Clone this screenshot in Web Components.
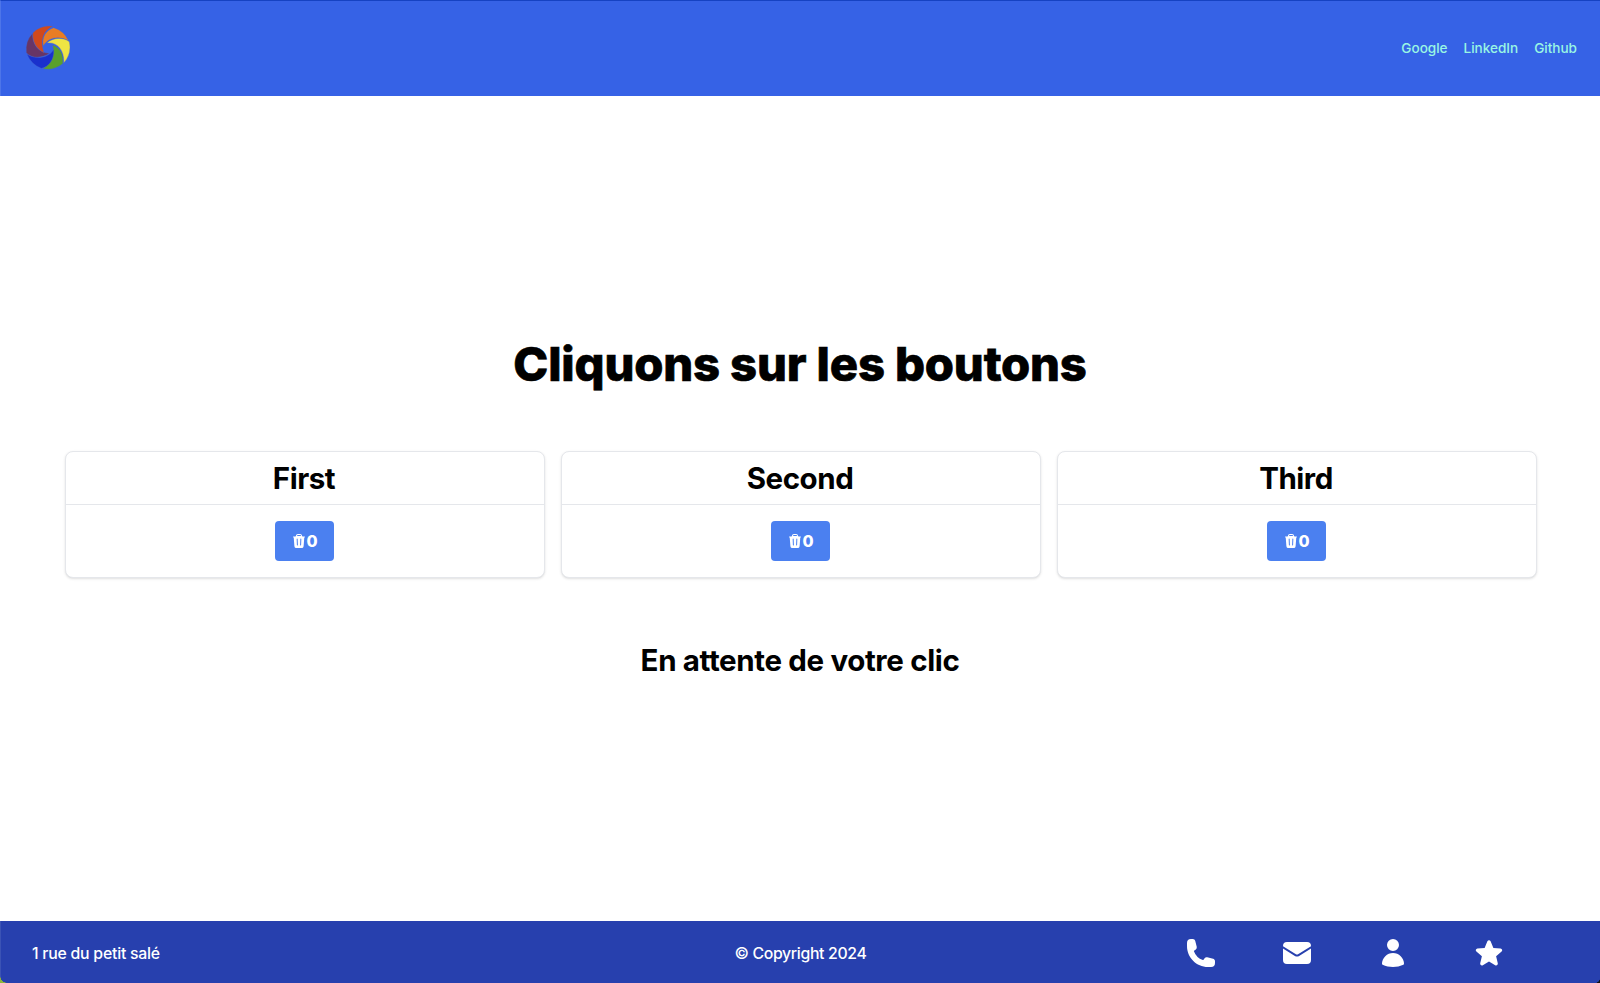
<!DOCTYPE html>
<html lang="fr">
<head>
<meta charset="utf-8">
<title>Cliquons sur les boutons</title>
<style>
html,body{margin:0;height:100%}
body{font-family:Inter,"Liberation Sans",sans-serif;font-size:16px;color:#000;background:#fff;overflow:hidden}
</style>
</head>
<body>
<click-app></click-app>
<script>
function define(name, html, setup) {
  const t = document.createElement('template');
  t.innerHTML = html;
  customElements.define(name, class extends HTMLElement {
    constructor() {
      super();
      this.attachShadow({mode: 'open'}).append(t.content.cloneNode(true));
    }
    connectedCallback() { if (setup) setup(this, this.shadowRoot); }
  });
}

const ICONS = {
  phone: '<path fill-rule="evenodd" clip-rule="evenodd" d="M1.5 4.5a3 3 0 0 1 3-3h1.372c.86 0 1.61.586 1.819 1.42l1.105 4.423a1.875 1.875 0 0 1-.694 1.955l-1.293.97c-.135.101-.164.249-.126.352a11.285 11.285 0 0 0 6.697 6.697c.103.038.25.009.352-.126l.97-1.293a1.875 1.875 0 0 1 1.955-.694l4.423 1.105c.834.209 1.42.959 1.42 1.82V19.5a3 3 0 0 1-3 3h-2.25C8.552 22.5 1.5 15.448 1.5 6.75V4.5Z"/>',
  envelope: '<path d="M1.5 8.67v8.58a3 3 0 0 0 3 3h15a3 3 0 0 0 3-3V8.67l-8.928 5.493a3 3 0 0 1-3.144 0L1.5 8.67Z"/><path d="M22.5 6.908V6.75a3 3 0 0 0-3-3h-15a3 3 0 0 0-3 3v.158l9.714 5.978a1.5 1.5 0 0 0 1.572 0L22.5 6.908Z"/>',
  user: '<path fill-rule="evenodd" clip-rule="evenodd" d="M7.5 6a4.5 4.5 0 1 1 9 0 4.5 4.5 0 0 1-9 0ZM3.751 20.105a8.25 8.25 0 0 1 16.498 0 .75.75 0 0 1-.437.695A18.683 18.683 0 0 1 12 22.5c-2.786 0-5.433-.608-7.812-1.7a.75.75 0 0 1-.437-.695Z"/>',
  star: '<path fill-rule="evenodd" clip-rule="evenodd" d="M10.788 3.21c.448-1.077 1.976-1.077 2.424 0l2.082 5.006 5.404.434c1.164.093 1.636 1.545.749 2.305l-4.117 3.527 1.257 5.273c.271 1.136-.964 2.033-1.96 1.425L12 18.354 7.373 21.18c-.996.608-2.231-.29-1.96-1.425l1.257-5.273-4.117-3.527c-.887-.76-.415-2.212.749-2.305l5.404-.434 2.082-5.005Z"/>',
  trash: '<path fill-rule="evenodd" clip-rule="evenodd" d="M16.5 4.478v.227a48.816 48.816 0 0 1 3.878.512.75.75 0 1 1-.256 1.478l-.209-.035-1.005 13.07a3 3 0 0 1-2.991 2.77H8.084a3 3 0 0 1-2.991-2.77L4.087 6.66l-.209.035a.75.75 0 0 1-.256-1.478A48.567 48.567 0 0 1 7.5 4.705v-.227c0-1.564 1.213-2.9 2.816-2.951a52.662 52.662 0 0 1 3.369 0c1.603.051 2.815 1.387 2.815 2.951Zm-6.136-1.452a51.196 51.196 0 0 1 3.273 0C14.39 3.05 15 3.684 15 4.478v.113a49.488 49.488 0 0 0-6 0v-.113c0-.794.609-1.428 1.364-1.452Zm-.355 5.945a.75.75 0 1 0-1.5.058l.347 9a.75.75 0 1 0 1.499-.058l-.346-9Zm5.48.058a.75.75 0 1 0-1.498-.058l-.347 9a.75.75 0 0 0 1.5.058l.345-9Z"/>'
};

define('solid-icon', `
<style>:host{display:block;width:32px;height:32px}svg{display:block;width:100%;height:100%}</style>
<svg viewBox="0 0 24 24" fill="currentColor"></svg>`,
(el, root) => { root.querySelector('svg').innerHTML = ICONS[el.getAttribute('name')]; });

define('swirl-logo', `
<style>:host{display:block;width:48px;height:48px}svg{display:block}</style>
<svg width="48" height="48" viewBox="72 72 144 144" stroke="#4a64c4" stroke-width="1">
<path fill="#e87d25" d="M130 138C125 110 137 92 161 83A72 72 0 0 1 206 123C178 106 144 112 130 138Z"/>
<path fill="#efe443" d="M141 129C157 113 188 110 208 125A72 72 0 0 1 191 189C194 155 175 125 141 129Z"/>
<path fill="#5aa02c" d="M158 135C181 143 192 165 188 191A72 72 0 0 1 129 206C152 192 166 164 158 135Z"/>
<path fill="#1a30cd" d="M161 149C163 180 146 200 124 205A76 76 0 0 1 81 163C111 180 145 174 161 149Z"/>
<path fill="#673567" d="M148 160C127 175 94 176 79 158A72 72 0 0 1 98 100C96 132 114 158 148 160Z"/>
<path fill="#d1491c" d="M132 158C107 146 96 122 99 98A70 70 0 0 1 159 79C130 91 119 121 132 158Z"/>
</svg>`);

define('nav-link', `
<style>:host{display:block}a{color:#99f6e4;text-decoration:none;font-size:13.6px;line-height:20px;letter-spacing:-.03px;font-weight:500;display:block}</style>
<a href="#"><slot></slot></a>`);

define('app-header', `
<style>
:host{display:flex;align-items:center;justify-content:space-between;box-sizing:border-box;height:96px;padding:0 23px 1px 24px;background:#3662e6;border-top:1px solid #1642c2;border-left:1px solid #4d75e9}
swirl-logo{margin-left:-1px}
nav{display:flex;gap:16px}
</style>
<swirl-logo></swirl-logo>
<nav><nav-link>Google</nav-link><nav-link>LinkedIn</nav-link><nav-link>Github</nav-link></nav>`);

define('count-button', `
<style>
:host{display:block}
button{display:flex;align-items:center;box-sizing:border-box;width:59px;height:40px;padding:0 16px;border:0;border-radius:4px;background:#4b80f0;color:#fff;font:800 16px/24px Inter,"Liberation Sans",sans-serif;cursor:pointer}
solid-icon{width:16px;height:16px;flex:none}
</style>
<button><solid-icon name="trash"></solid-icon><span>0</span></button>`,
(el, root) => {
  const s = root.querySelector('span');
  root.querySelector('button').onclick = () => { s.textContent = +s.textContent + 1; };
});

define('click-card', `
<style>
:host{display:block;box-sizing:border-box;height:127px;border:1px solid #e5e7eb;border-radius:8px;background:#fff;box-shadow:0 1px 3px rgba(0,0,0,.1),0 1px 2px -1px rgba(0,0,0,.1)}
h2{margin:0;padding-right:2px;height:52px;line-height:52px;border-bottom:1px solid #e5e7eb;text-align:center;font-weight:700;font-size:29.5px;letter-spacing:-.45px}
div{display:flex;justify-content:center;padding:16px 2px 16px 0}
</style>
<h2><slot></slot></h2><div><count-button></count-button></div>`);

define('app-main', `
<style>
:host{display:flex;flex-direction:column;justify-content:center;align-items:stretch;padding:0 63px 5px 65px;min-height:0}
h1{margin:0 0 57px;padding-right:2px;text-align:center;font-weight:800;font-size:47.2px;line-height:60px;letter-spacing:-.18px;-webkit-text-stroke:.7px #000}
section{display:grid;grid-template-columns:repeat(3,1fr);gap:16px}
p{margin:64px 0 0;padding-right:2px;text-align:center;font-weight:700;font-size:29.5px;line-height:36px;letter-spacing:-.36px;font-feature-settings:"calt" 0,"liga" 0,"dlig" 0}
</style>
<h1>Cliquons sur les boutons</h1>
<section><click-card>First</click-card><click-card>Second</click-card><click-card>Third</click-card></section>
<p>En attente de votre clic</p>`);

define('app-footer', `
<style>
:host{display:grid;grid-template-columns:1fr 1fr 1fr;align-items:center;box-sizing:border-box;height:62px;padding:2px 31px 0 31px;background:#2740ae;border-left:1px solid #3b53b5;color:#fff;line-height:24px;font-weight:500;font-size:15.8px;position:relative}
.a,.c{padding-top:1px}
.a{letter-spacing:-.22px}
.c{text-align:center;letter-spacing:-.32px}
.i{display:flex;gap:64px;justify-content:flex-end;padding-right:64px}
:host::before,:host::after{content:"";position:absolute;bottom:0;width:7px;height:7px}
:host::before{left:-1px;background:radial-gradient(circle at 100% 0,transparent 6.5px,#8bb63c 7px)}
:host::after{right:0;width:5px;height:5px;background:radial-gradient(circle at 0 0,transparent 4.7px,#111 5.2px)}
</style>
<div class="a">1 rue du petit salé</div>
<div class="c">© Copyright 2024</div>
<div class="i"><solid-icon name="phone"></solid-icon><solid-icon name="envelope"></solid-icon><solid-icon name="user"></solid-icon><solid-icon name="star"></solid-icon></div>`);

define('click-app', `
<style>:host{display:grid;grid-template-rows:96px 1fr 62px;height:100vh}</style>
<app-header></app-header><app-main></app-main><app-footer></app-footer>`);
</script>
</body>
</html>
